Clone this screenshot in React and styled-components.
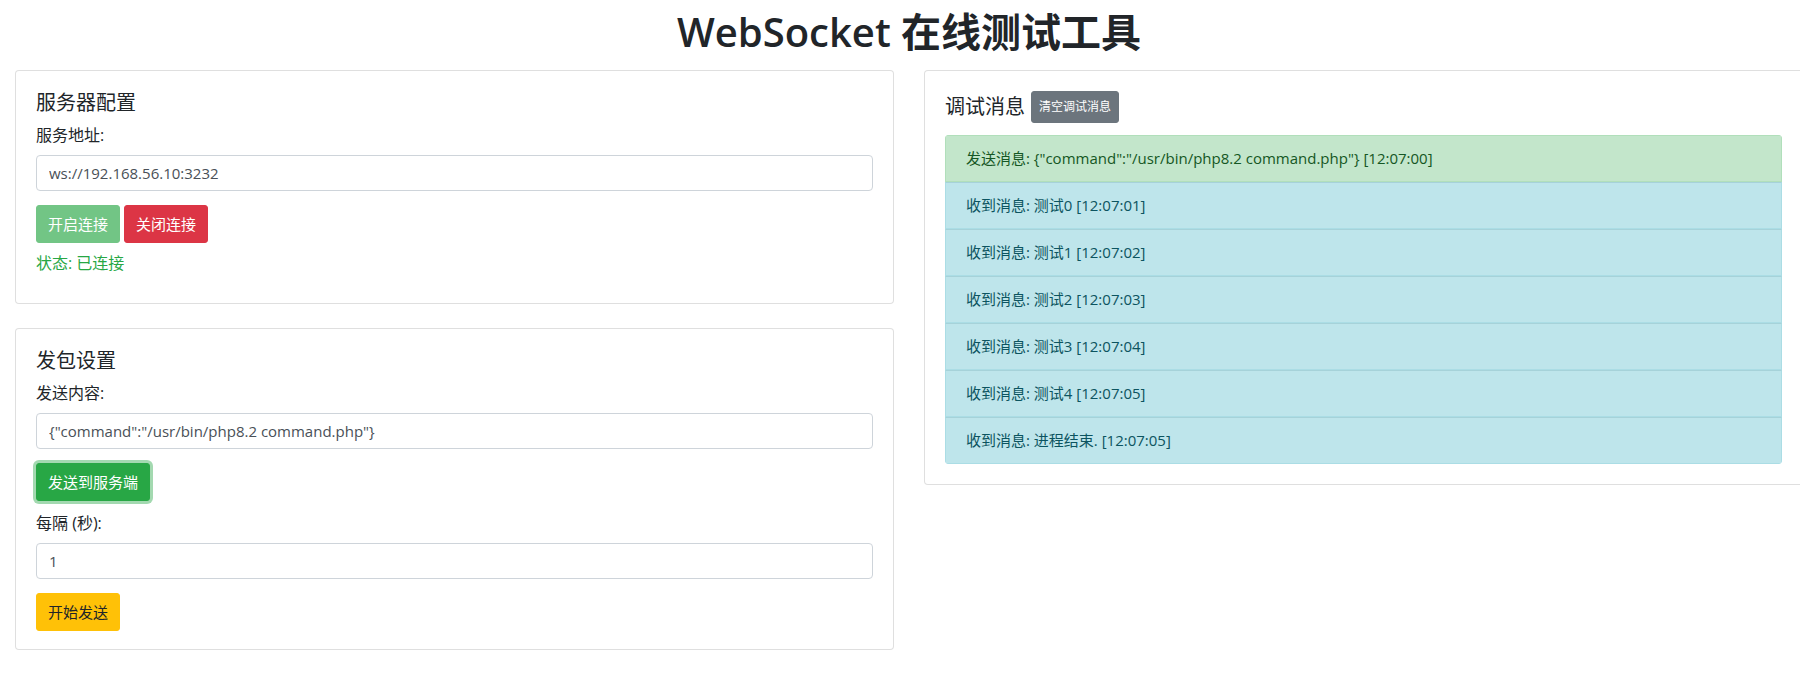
import styled, { createGlobalStyle } from "styled-components";

const GlobalStyle = createGlobalStyle`
  html, body { margin: 0; padding: 0; background: #fff; overflow: hidden; }
  body {
    font-family: "Open Sans", "Noto Sans CJK SC", sans-serif;
    font-size: 16px;
    line-height: 1.5;
    color: #212529;
  }
  * { box-sizing: border-box; }
`;

const Page = styled.div`
  width: 1818px;
  padding: 0 15px;
`;

const Title = styled.h1`
  margin: 8px 0 14px;
  text-align: center;
  font-size: 40px;
  font-weight: 600;
  line-height: 1.2;
  color: #212529;
`;

const Row = styled.div`
  display: grid;
  grid-template-columns: 1fr 1fr;
  gap: 30px;
  align-items: start;
`;

const Column = styled.div`
  display: flex;
  flex-direction: column;
  gap: 24px;
`;

const Card = styled.div`
  border: 1px solid rgba(0, 0, 0, 0.125);
  border-radius: 4px;
  padding: 20px 20px ${(p) => p.$bottom || 20}px;
  background: #fff;
`;

const CardTitle = styled.h5`
  margin: 0 0 8px;
  font-size: 20px;
  font-weight: 400;
  line-height: 1.2;
  display: flex;
  align-items: center;
  gap: 6px;
`;

const Label = styled.label`
  display: block;
  margin-bottom: 8px;
`;

const Input = styled.input`
  display: block;
  width: 100%;
  height: 36px;
  padding: 6px 12px;
  font: inherit;
  font-size: 15px;
  color: #495057;
  border: 1px solid #ced4da;
  border-radius: 4px;
  margin-bottom: 14px;
  outline: none;
`;

const colors = {
  success: ["#28a745", "#fff"],
  danger: ["#dc3545", "#fff"],
  warning: ["#ffc107", "#212529"],
  secondary: ["#6c757d", "#fff"],
};

const Button = styled.button`
  font: inherit;
  font-size: ${(p) => (p.$small ? "12px" : "15px")};
  line-height: ${(p) => (p.$small ? "18px" : "24px")};
  padding: ${(p) => (p.$small ? "6px 7px" : "6px 11px")};
  border: 1px solid ${(p) => colors[p.$variant][0]};
  background: ${(p) => colors[p.$variant][0]};
  color: ${(p) => colors[p.$variant][1]};
  border-radius: 3px;
  opacity: ${(p) => (p.disabled ? 0.65 : 1)};
  box-shadow: ${(p) => (p.$focus ? "0 0 0 3px rgba(72,180,97,.5)" : "none")};
  cursor: pointer;
`;

const ButtonRow = styled.div`
  display: flex;
  gap: 4px;
  margin-bottom: ${(p) => p.$mb || 0}px;
`;

const Status = styled.div`
  color: #28a745;
  margin-top: 8px;
`;

const List = styled.ul`
  list-style: none;
  margin: 12px 0 0;
  padding: 0;
  border-radius: 4px;
  overflow: hidden;
`;

const Item = styled.li`
  padding: 10px 20px;
  line-height: 25px;
  font-size: 15px;
  background: ${(p) => (p.$sent ? "#c3e6cb" : "#bee5eb")};
  color: ${(p) => (p.$sent ? "#155724" : "#0c5460")};
  border: 1px solid ${(p) => (p.$sent ? "#b1dfbb" : "#abdde5")};
  & + & { border-top: 1px solid #a6d2d9; }
`;

const messages = [
  '发送消息: {"command":"/usr/bin/php8.2 command.php"} [12:07:00]',
  "收到消息: 测试0 [12:07:01]",
  "收到消息: 测试1 [12:07:02]",
  "收到消息: 测试2 [12:07:03]",
  "收到消息: 测试3 [12:07:04]",
  "收到消息: 测试4 [12:07:05]",
  "收到消息: 进程结束. [12:07:05]",
];

export default function App() {
  return (
    <>
      <GlobalStyle />
      <Page>
        <Title>WebSocket 在线测试工具</Title>
        <Row>
          <Column>
            <Card $bottom={28}>
              <CardTitle>服务器配置</CardTitle>
              <Label>服务地址:</Label>
              <Input defaultValue="ws://192.168.56.10:3232" />
              <ButtonRow>
                <Button $variant="success" disabled>开启连接</Button>
                <Button $variant="danger">关闭连接</Button>
              </ButtonRow>
              <Status>状态: 已连接</Status>
            </Card>
            <Card $bottom={18}>
              <CardTitle>发包设置</CardTitle>
              <Label>发送内容:</Label>
              <Input defaultValue={'{"command":"/usr/bin/php8.2 command.php"}'} />
              <ButtonRow $mb={10}>
                <Button $variant="success" $focus>发送到服务端</Button>
              </ButtonRow>
              <Label>每隔 (秒):</Label>
              <Input defaultValue="1" />
              <ButtonRow>
                <Button $variant="warning">开始发送</Button>
              </ButtonRow>
            </Card>
          </Column>
          <Column>
            <Card>
              <CardTitle>
                调试消息
                <Button $variant="secondary" $small>清空调试消息</Button>
              </CardTitle>
              <List>
                {messages.map((m, i) => (
                  <Item key={i} $sent={i === 0}>{m}</Item>
                ))}
              </List>
            </Card>
          </Column>
        </Row>
      </Page>
    </>
  );
}
